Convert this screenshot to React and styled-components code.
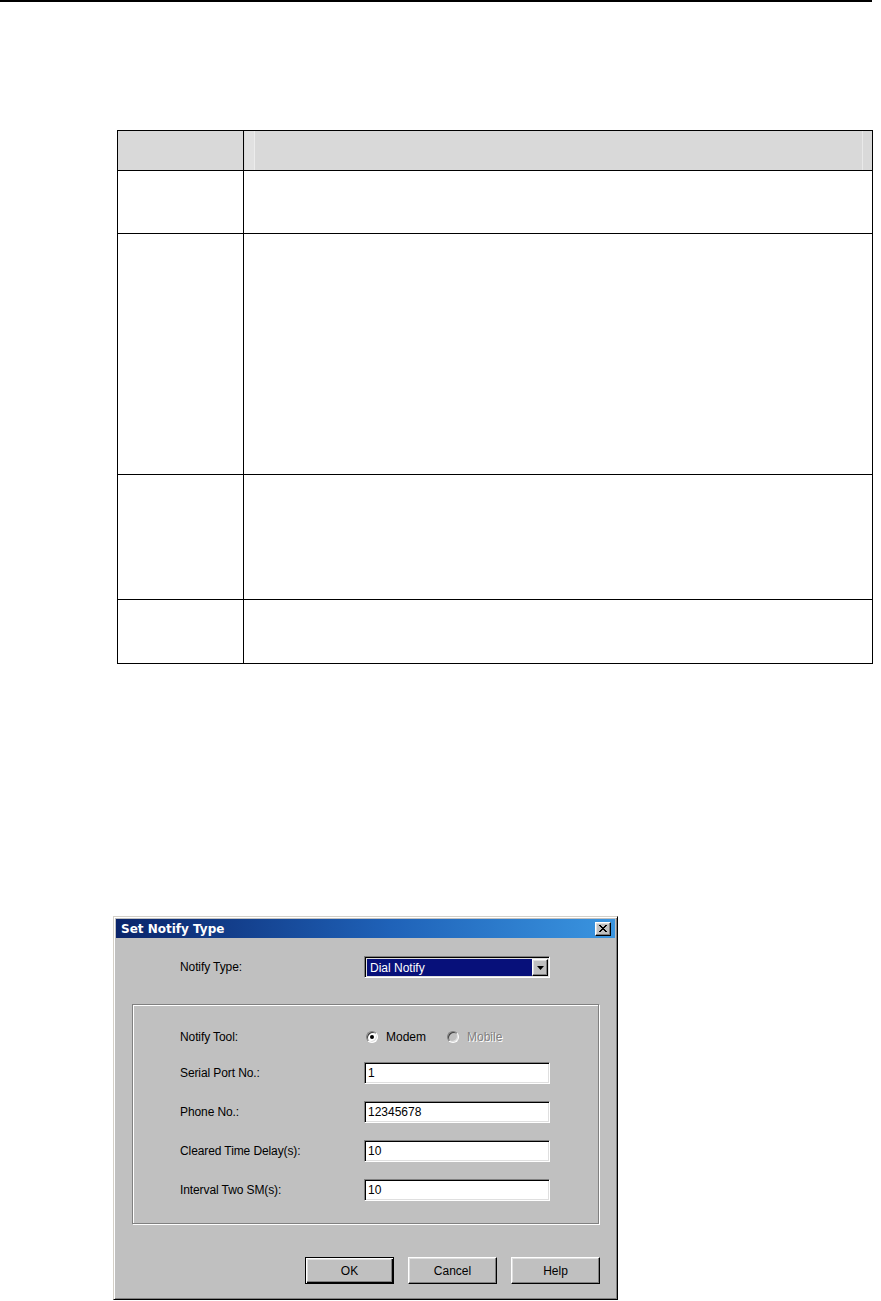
import React from 'react';
import styled, { createGlobalStyle } from 'styled-components';

const Global = createGlobalStyle`
  html, body { margin: 0; padding: 0; background: #fff; }
  body { font-family: "Liberation Sans", Arial, sans-serif; }
  * { box-sizing: border-box; }
`;

const Page = styled.div`
  width: 881px;
  height: 1301px;
  overflow: hidden;
  background: #fff;
  display: flex;
  flex-direction: column;
`;

const TopRule = styled.div`
  flex: none;
  width: 872px;
  height: 2px;
  background: #000;
`;

const Grid = styled.div`
  flex: none;
  margin: 128px 0 0 117px;
  width: 756px;
  display: grid;
  grid-template-columns: 126px 629px;
  grid-template-rows: 40px 63px 241px 125px 64px;
  border-top: 1px solid #000;
  border-left: 1px solid #000;
`;

const Cell = styled.div`
  border-right: 1px solid #000;
  border-bottom: 1px solid #000;
  background: ${p => (p.$head ? '#d9d9d9' : '#fff')};
`;

const HeadCellWide = styled(Cell)`
  background:
    linear-gradient(to right, transparent 0, transparent 1px, #e1e1e1 1px, #e1e1e1 10px, #ececec 10px, #ececec 11px, transparent 11px),
    linear-gradient(to left, transparent 0, transparent 9px, #e9e9e9 9px, #e9e9e9 10px, transparent 10px),
    #d9d9d9;
`;

const Dialog = styled.div`
  flex: none;
  margin: 252px 0 0 113px;
  width: 505px;
  height: 384px;
  background: #c0c0c0;
  border: 1px solid;
  border-color: #d4d0c8 #000 #000 #d4d0c8;
  box-shadow: inset 1px 1px 0 #fff, inset -1px -1px 0 #808080;
  padding: 2px;
  display: flex;
  flex-direction: column;
  font-size: 12px;
  color: #000;
`;

const TitleBar = styled.div`
  height: 19px;
  background: linear-gradient(to right, #0a246a 0%, #1f62b8 55%, #3a95e0 100%);
  display: flex;
  align-items: center;
  justify-content: space-between;
  padding: 0 4px 0 5px;
`;

const Title = styled.span`
  font-family: "DejaVu Sans", Verdana, sans-serif;
  font-weight: bold;
  font-size: 12px;
  color: #fff;
`;

const Raised = styled.div`
  background: #c0c0c0;
  border: 1px solid;
  border-color: #fff #000 #000 #fff;
  box-shadow: inset -1px -1px 0 #808080, inset 1px 1px 0 #dfdfdf;
  display: flex;
  align-items: center;
  justify-content: center;
`;

const CloseBtn = styled(Raised)`
  width: 16px;
  height: 14px;
`;

const Body = styled.div`
  flex: 1;
  display: flex;
  flex-direction: column;
  padding: 18px 15px 0 16px;
`;

const Row = styled.div`
  display: flex;
  align-items: center;
  height: 22px;
  padding-left: ${p => p.$indent}px;
  margin-top: ${p => p.$mt || 0}px;
`;

const Label = styled.span`
  width: 184px;
  flex: none;
  font-size: 12px;
  letter-spacing: -0.1px;
  white-space: nowrap;
`;

const Sunken = styled.div`
  width: 186px;
  height: 22px;
  background: #fff;
  border: 1px solid;
  border-color: #808080 #fff #fff #808080;
  box-shadow: inset 1px 1px 0 #000, inset -1px -1px 0 #dfdfdf;
`;

const Field = styled(Sunken)`
  display: flex;
  align-items: center;
  padding-left: 3px;
  font-size: 12px;
`;

const Combo = styled(Sunken)`
  display: flex;
  align-items: stretch;
  padding: 1px 1px 1px 1px;
  background: #dfdfdf;
`;

const ComboValue = styled.div`
  flex: 1;
  background: #07107a;
  color: #fff;
  display: flex;
  align-items: center;
  padding-left: 3px;
  margin: 1px 0 0 1px;
  font-size: 12px;
`;

const ComboBtn = styled(Raised)`
  width: 16px;
  flex: none;
  margin: 1px 0 0 0;
`;

const GroupBox = styled.div`
  margin-top: 26px;
  width: 467px;
  border: 1px solid #808080;
  box-shadow: inset 1px 1px 0 #fff, 1px 1px 0 #fff;
  padding: 21px 0 22px 0;
  display: flex;
  flex-direction: column;
`;

const RadioGroup = styled.div`
  display: flex;
  align-items: center;
  padding-left: 2px;
`;

const RadioItem = styled.label`
  display: flex;
  align-items: center;
  gap: 8px;
  width: ${p => p.$w}px;
  font-size: 12px;
  color: ${p => (p.$disabled ? '#808080' : '#000')};
  text-shadow: ${p => (p.$disabled ? '1px 1px 0 #fff' : 'none')};
`;

const RadioCircle = styled.span`
  position: relative;
  width: 12px;
  height: 12px;
  border-radius: 50%;
  border: 1px solid;
  border-color: #808080 #fff #fff #808080;
  background: ${p => (p.$disabled ? '#c0c0c0' : '#fff')};
  box-shadow: inset 1px 1px 0 #404040, inset -1px -1px 0 #dfdfdf;
  flex: none;
  &::after {
    content: '';
    display: ${p => (p.$checked ? 'block' : 'none')};
    position: absolute;
    width: 4px;
    height: 4px;
    border-radius: 50%;
    background: #000;
    left: 3px;
    top: 3px;
  }
`;

const Buttons = styled.div`
  margin-top: 33px;
  width: 468px;
  display: flex;
  justify-content: flex-end;
  gap: 14px;
`;

const PushButton = styled(Raised)`
  width: 89px;
  height: 27px;
  font-size: 12px;
  ${p =>
    p.$default &&
    `
    border-color: #000;
    box-shadow: inset 1px 1px 0 #fff, inset -1px -1px 0 #000, inset -2px -2px 0 #808080, inset 2px 2px 0 #dfdfdf;
  `}
`;

const CloseGlyph = () => (
  <svg width="8" height="7" viewBox="0 0 8 7">
    <path d="M0 0h2v1h1v1h2V1h1V0h2v1H7v1H6v1H5v1h1v1h1v1h1v1H6V6H5V5H3v1H2v1H0V6h1V5h1V4h1V3H2V2H1V1H0z" fill="#000" />
  </svg>
);

const ArrowGlyph = () => (
  <svg width="7" height="4" viewBox="0 0 7 4">
    <path d="M0 0h7L3.5 4z" fill="#000" />
  </svg>
);

const fields = [
  { label: 'Serial Port No.:', value: '1' },
  { label: 'Phone No.:', value: '12345678' },
  { label: 'Cleared Time Delay(s):', value: '10' },
  { label: 'Interval Two SM(s):', value: '10' },
];

export default function App() {
  return (
    <Page>
      <Global />
      <TopRule />
      <Grid>
        <Cell $head />
        <HeadCellWide />
        <Cell /><Cell />
        <Cell /><Cell />
        <Cell /><Cell />
        <Cell /><Cell />
      </Grid>
      <Dialog>
        <TitleBar>
          <Title>Set Notify Type</Title>
          <CloseBtn><CloseGlyph /></CloseBtn>
        </TitleBar>
        <Body>
          <Row $indent={48}>
            <Label>Notify Type:</Label>
            <Combo>
              <ComboValue>Dial Notify</ComboValue>
              <ComboBtn><ArrowGlyph /></ComboBtn>
            </Combo>
          </Row>
          <GroupBox>
            <Row $indent={47}>
              <Label>Notify Tool:</Label>
              <RadioGroup>
                <RadioItem $w={81}>
                  <RadioCircle $checked />
                  Modem
                </RadioItem>
                <RadioItem $w={70} $disabled>
                  <RadioCircle $disabled />
                  Mobile
                </RadioItem>
              </RadioGroup>
            </Row>
            {fields.map((f, i) => (
              <Row key={f.label} $indent={47} $mt={i === 0 ? 14 : 17}>
                <Label>{f.label}</Label>
                <Field>{f.value}</Field>
              </Row>
            ))}
          </GroupBox>
          <Buttons>
            <PushButton $default>OK</PushButton>
            <PushButton>Cancel</PushButton>
            <PushButton>Help</PushButton>
          </Buttons>
        </Body>
      </Dialog>
    </Page>
  );
}
